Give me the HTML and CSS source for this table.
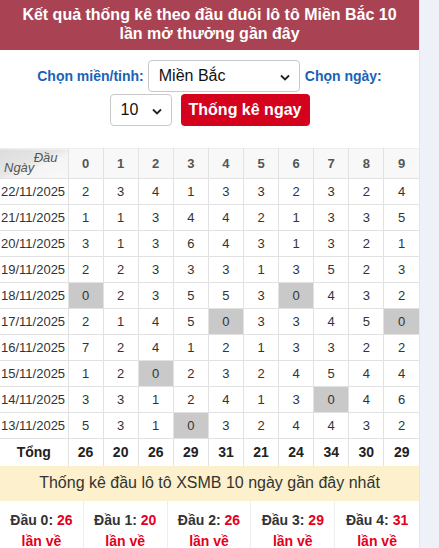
FILE: index.html
```html
<!DOCTYPE html>
<html lang="vi">
<head>
<meta charset="utf-8">
<title>Thống kê đầu đuôi lô tô</title>
<link rel="stylesheet" href="styles.css">
</head>
<body>
<div class="page">
  <h1 class="title">Kết quả thống kê theo đầu đuôi lô tô Miền Bắc 10 lần mở thưởng gần đây</h1>
  <form class="filter">
    <div class="frow">
      <label class="lbl">Chọn miền/tỉnh:</label>
      <div class="sel sel-region">
        <span class="sel-text">Miền Bắc</span>
        <svg class="chev" width="10" height="7" viewBox="0 0 10 7"><path d="M1 1.5 L5 5.5 L9 1.5" fill="none" stroke="#222" stroke-width="1.8"/></svg>
      </div>
      <label class="lbl">Chọn ngày:</label>
    </div>
    <div class="frow">
      <div class="sel sel-days">
        <span class="sel-text">10</span>
        <svg class="chev" width="10" height="7" viewBox="0 0 10 7"><path d="M1 1.5 L5 5.5 L9 1.5" fill="none" stroke="#222" stroke-width="1.8"/></svg>
      </div>
      <button type="button" class="btn">Thống kê ngay</button>
    </div>
  </form>

  <table class="stats">
    <colgroup><col class="c-date"><col><col><col><col><col><col><col><col><col><col></colgroup>
    <thead>
      <tr>
        <th class="corner"><span class="dau">Đầu</span><span class="ngay">Ngày</span></th>
        <th>0</th><th>1</th><th>2</th><th>3</th><th>4</th><th>5</th><th>6</th><th>7</th><th>8</th><th>9</th>
      </tr>
    </thead>
    <tbody>
      <tr><td class="d">22/11/2025</td><td>2</td><td>3</td><td>4</td><td>1</td><td>3</td><td>3</td><td>2</td><td>3</td><td>2</td><td>4</td></tr>
      <tr><td class="d">21/11/2025</td><td>1</td><td>1</td><td>3</td><td>4</td><td>4</td><td>2</td><td>1</td><td>3</td><td>3</td><td>5</td></tr>
      <tr><td class="d">20/11/2025</td><td>3</td><td>1</td><td>3</td><td>6</td><td>4</td><td>3</td><td>1</td><td>3</td><td>2</td><td>1</td></tr>
      <tr><td class="d">19/11/2025</td><td>2</td><td>2</td><td>3</td><td>3</td><td>3</td><td>1</td><td>3</td><td>5</td><td>2</td><td>3</td></tr>
      <tr><td class="d">18/11/2025</td><td class="z">0</td><td>2</td><td>3</td><td>5</td><td>5</td><td>3</td><td class="z">0</td><td>4</td><td>3</td><td>2</td></tr>
      <tr><td class="d">17/11/2025</td><td>2</td><td>1</td><td>4</td><td>5</td><td class="z">0</td><td>3</td><td>3</td><td>4</td><td>5</td><td class="z">0</td></tr>
      <tr><td class="d">16/11/2025</td><td>7</td><td>2</td><td>4</td><td>1</td><td>2</td><td>1</td><td>3</td><td>3</td><td>2</td><td>2</td></tr>
      <tr><td class="d">15/11/2025</td><td>1</td><td>2</td><td class="z">0</td><td>2</td><td>3</td><td>2</td><td>4</td><td>5</td><td>4</td><td>4</td></tr>
      <tr><td class="d">14/11/2025</td><td>3</td><td>3</td><td>1</td><td>2</td><td>4</td><td>1</td><td>3</td><td class="z">0</td><td>4</td><td>6</td></tr>
      <tr><td class="d">13/11/2025</td><td>5</td><td>3</td><td>1</td><td class="z">0</td><td>3</td><td>2</td><td>4</td><td>4</td><td>3</td><td>2</td></tr>
      <tr class="total"><td>Tổng</td><td>26</td><td>20</td><td>26</td><td>29</td><td>31</td><td>21</td><td>24</td><td>34</td><td>30</td><td>29</td></tr>
    </tbody>
  </table>

  <div class="notice">Thống kê đầu lô tô XSMB 10 ngày gần đây nhất</div>
  <div class="summary">
    <div class="item"><span class="k">Đầu 0:</span> <span class="v">26</span><br><span class="v">lần về</span></div>
    <div class="item"><span class="k">Đầu 1:</span> <span class="v">20</span><br><span class="v">lần về</span></div>
    <div class="item"><span class="k">Đầu 2:</span> <span class="v">26</span><br><span class="v">lần về</span></div>
    <div class="item"><span class="k">Đầu 3:</span> <span class="v">29</span><br><span class="v">lần về</span></div>
    <div class="item"><span class="k">Đầu 4:</span> <span class="v">31</span><br><span class="v">lần về</span></div>
  </div>
</div>
</body>
</html>
```

FILE: styles.css
```css
* { box-sizing: border-box; }
html, body {
  margin: 0;
  padding: 0;
}
body {
  background: #eef2f8;
  font-family: "Liberation Sans", Arial, sans-serif;
  color: #333;
  overflow: hidden;
}
.page {
  width: 420px;
  background: #fff;
  border-right: 1px solid #e4e6ea;
  min-height: 548px;
}
.title {
  margin: 0;
  background: #a94353;
  color: #fff;
  font-size: 16px;
  font-weight: bold;
  line-height: 19px;
  text-align: center;
  padding: 5px 14px 7px;
}
.filter {
  margin: 10px 0 0;
  display: flex;
  flex-direction: column;
  gap: 2px;
}
.frow {
  display: flex;
  justify-content: center;
  align-items: center;
}
.lbl {
  color: #1a62b6;
  font-weight: bold;
  font-size: 14px;
}
.sel {
  position: relative;
  height: 32px;
  border: 1px solid #c9c9c9;
  border-radius: 4px;
  background: #fff;
  display: flex;
  align-items: center;
  font-size: 16px;
  color: #111;
  padding-left: 10px;
}
.sel-region {
  width: 152px;
  margin: 0 5px 0 4px;
}
.sel-days {
  width: 62px;
  margin-right: 9px;
}
.chev {
  position: absolute;
  right: 9px;
  top: 13px;
}
.btn {
  height: 32px;
  width: 129px;
  border: 0;
  border-radius: 4px;
  background: #d4021c;
  color: #fff;
  font-family: "Liberation Sans", Arial, sans-serif;
  font-weight: bold;
  font-size: 16px;
  padding: 0;
}
.stats {
  margin-top: 22px;
  width: 419px;
  table-layout: fixed;
  border-collapse: collapse;
  font-size: 13px;
}
.c-date { width: 68px; }
.stats th, .stats td {
  border: 1px solid #e2e2e2;
  text-align: center;
  padding: 0;
}
.stats tr:first-child th { border-top-color: #eeeeee; }
.stats th:first-child, .stats td:first-child { border-left: 0; }
.stats th:last-child, .stats td:last-child { border-right: 0; }
.stats thead th {
  height: 30px;
  background: #f8f8f8;
  color: #555;
  font-weight: bold;
  font-size: 13px;
}
.stats th.corner {
  position: relative;
  background: linear-gradient(to bottom right, #dcdcdc 0%, #e6e6e6 45%, #f4f4f4 60%, #f8f8f8 100%);
  font-weight: normal;
  font-style: italic;
  font-size: 13px;
  color: #555;
}
.dau {
  position: absolute;
  right: 10px;
  top: 1px;
}
.ngay {
  position: absolute;
  left: 4px;
  bottom: 3px;
}
.stats td {
  height: 26px;
  color: #333;
}
.stats td.d {
  text-align: left;
  padding-left: 1px;
}
.stats td.z { background: #c9c9c9; }
.stats tr.total td {
  height: 27px;
  font-weight: bold;
  font-size: 14px;
  color: #222;
  border-bottom: 0;
}
.notice {
  height: 35px;
  background: #fcf1cc;
  color: #333;
  font-size: 16px;
  display: flex;
  align-items: center;
  justify-content: center;
}
.summary {
  display: grid;
  grid-template-columns: repeat(5, 1fr);
  width: 419px;
}
.item {
  border-right: 1px solid #eeeeee;
  text-align: center;
  font-weight: bold;
  font-size: 14px;
  line-height: 21px;
  padding-top: 9px;
  height: 60px;
}
.item:last-child { border-right: 0; }
.k { color: #333; }
.v { color: #e3001b; }
```
